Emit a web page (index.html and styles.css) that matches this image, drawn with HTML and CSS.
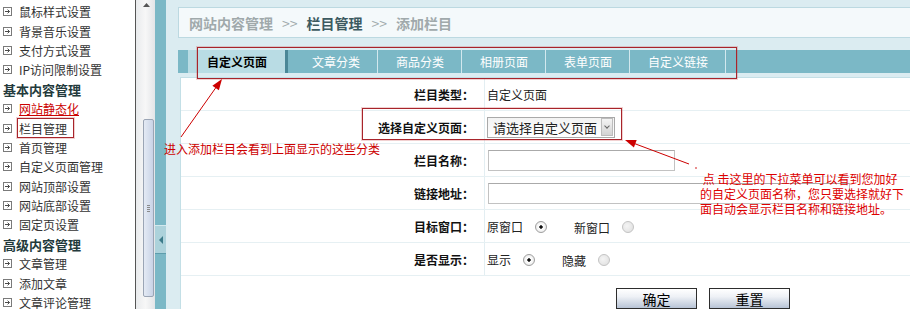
FILE: index.html
```html
<!DOCTYPE html>
<html>
<head>
<meta charset="utf-8">
<title>添加栏目</title>
<link rel="stylesheet" href="styles.css">
</head>
<body>
<svg width="0" height="0" class="defs">
  <symbol id="ico-go" viewBox="0 0 9 9">
    <rect x="0.5" y="0.5" width="8" height="8" fill="#fff" stroke="#7a7a7a"/>
    <path d="M2 4.5h4.5M4.6 2.6l1.9 1.9-1.9 1.9" fill="none" stroke="#4a4a4a"/>
  </symbol>
</svg>

<div class="page">
  <div class="sidebar">
    <ul class="menu">
      <li><svg class="ico"><use href="#ico-go"/></svg>鼠标样式设置</li>
      <li><svg class="ico"><use href="#ico-go"/></svg>背景音乐设置</li>
      <li><svg class="ico"><use href="#ico-go"/></svg>支付方式设置</li>
      <li><svg class="ico"><use href="#ico-go"/></svg>IP访问限制设置</li>
      <li class="head">基本内容管理</li>
      <li><svg class="ico"><use href="#ico-go"/></svg><span class="hot">网站静态化</span></li>
      <li><svg class="ico"><use href="#ico-go"/></svg>栏目管理</li>
      <li><svg class="ico"><use href="#ico-go"/></svg>首页管理</li>
      <li><svg class="ico"><use href="#ico-go"/></svg>自定义页面管理</li>
      <li><svg class="ico"><use href="#ico-go"/></svg>网站顶部设置</li>
      <li><svg class="ico"><use href="#ico-go"/></svg>网站底部设置</li>
      <li><svg class="ico"><use href="#ico-go"/></svg>固定页设置</li>
      <li class="head">高级内容管理</li>
      <li><svg class="ico"><use href="#ico-go"/></svg>文章管理</li>
      <li><svg class="ico"><use href="#ico-go"/></svg>添加文章</li>
      <li><svg class="ico"><use href="#ico-go"/></svg>文章评论管理</li>
    </ul>
  </div>

  <div class="scrollbar">
    <div class="sb-up"><svg width="7" height="4"><path d="M0 4L3.5 0 7 4z" fill="#555"/></svg></div>
    <div class="sb-track">
      <div class="sb-thumb"><span class="grip"></span></div>
    </div>
  </div>

  <div class="splitter">
    <div class="split-btn"></div>
  </div>

  <div class="main">
    <div class="crumb">
      <span>网站内容管理</span><span class="sep">&gt;&gt;</span><span class="cur">栏目管理</span><span class="sep">&gt;&gt;</span><span>添加栏目</span>
    </div>

    <div class="tabs">
      <span class="tab active">自定义页面</span>
      <span class="tab">文章分类</span>
      <span class="tab">商品分类</span>
      <span class="tab">相册页面</span>
      <span class="tab">表单页面</span>
      <span class="tab">自定义链接</span>
    </div>

    <div class="panel">
      <table class="form">
        <tr>
          <th>栏目类型：</th>
          <td>自定义页面</td>
        </tr>
        <tr>
          <th>选择自定义页面：</th>
          <td><div class="select"><span>请选择自定义页面</span><span class="drop"></span></div></td>
        </tr>
        <tr>
          <th>栏目名称：</th>
          <td><input class="text" type="text"></td>
        </tr>
        <tr>
          <th>链接地址：</th>
          <td><input class="text wide" type="text"></td>
        </tr>
        <tr>
          <th>目标窗口：</th>
          <td class="opts"><span>原窗口</span><input class="radio" type="radio" name="target" checked><span class="gap">新窗口</span><input class="radio" type="radio" name="target"></td>
        </tr>
        <tr>
          <th>是否显示：</th>
          <td class="opts"><span>显示</span><input class="radio" type="radio" name="show" checked><span class="gap">隐藏</span><input class="radio" type="radio" name="show"></td>
        </tr>
      </table>
      <div class="actions">
        <button class="btn">确定</button>
        <button class="btn">重置</button>
      </div>
    </div>
  </div>

  <!-- annotations drawn over the screenshot -->
  <div class="notes">
    <div class="box box-menu"></div>
    <div class="box box-tabs"></div>
    <div class="box box-select"></div>
    <svg class="arrows" width="910" height="309">
      <line x1="181" y1="137" x2="217" y2="86" stroke="#c00" stroke-width="1"/>
      <polygon points="222,79 218.9,90.3 212.4,85.7" fill="#c00"/>
      <line x1="689" y1="164" x2="633" y2="143" stroke="#c00" stroke-width="1"/>
      <polygon points="625,140 636.7,140.1 633.9,147.6" fill="#c00"/>
      <circle cx="696" cy="168" r="0.8" fill="#c00"/>
    </svg>
    <div class="note note-tabs">进入添加栏目会看到上面显示的这些分类</div>
    <div class="note note-select">&nbsp;点 击这里的下拉菜单可以看到您加好<br>的自定义页面名称，您只要选择就好下<br>面自动会显示栏目名称和链接地址。</div>
  </div>
</div>
</body>
</html>
```

FILE: styles.css
```css
body {
    margin: 0;
    font-family: "Noto Sans CJK SC", "Noto Sans", sans-serif;
    font-size: 12px;
    color: #222;
}

.defs {
    position: absolute;
}

.page {
    position: relative;
    display: flex;
    width: 910px;
    height: 309px;
    overflow: hidden;
    background: #fff;
}

/* left menu */
.sidebar {
    width: 135px;
    flex: none;
    overflow: hidden;
}

.menu {
    list-style: none;
    margin: 0;
    padding: 2px 0 0 3px;
}

.menu li {
    display: flex;
    align-items: center;
    height: 19.4px;
    white-space: nowrap;
    color: #333;
}

.menu .ico {
    width: 9px;
    height: 9px;
    margin-right: 7px;
    flex: none;
}

.menu .head {
    font-size: 13px;
    font-weight: bold;
    color: #233a3c;
}

.menu .hot {
    color: #c00;
    text-decoration: underline;
}

/* fake scrollbar of the menu frame */
.scrollbar {
    width: 19px;
    flex: none;
    border-left: 1px solid #555;
    background: linear-gradient(to right, #e9ebed, #f7f7f7 50%, #e3e5e8);
    display: flex;
    flex-direction: column;
}

.sb-up {
    height: 13px;
    display: flex;
    justify-content: center;
    padding: 3px 0 0 2px;
    box-sizing: border-box;
}

.sb-track {
    flex: 1;
    padding: 106px 0 0 7px;
}

.sb-thumb {
    width: 9px;
    height: 176px;
    border: 1px solid #9ba5b5;
    border-radius: 2px;
    background: linear-gradient(to right, #e4eaf4, #c9d3e6);
    display: flex;
    align-items: center;
    justify-content: center;
}

.grip {
    width: 3px;
    height: 7px;
    background: repeating-linear-gradient(#8a8a8a 0 1px, transparent 1px 2px);
}

/* collapse strip */
.splitter {
    width: 11px;
    flex: none;
    background: #7bb8c6;
    padding-top: 225px;
    box-sizing: border-box;
}

.split-btn {
    height: 27px;
    background: #acd2db;
    border-top: 1px solid #d2e9ee;
    border-bottom: 1px solid #5e9dac;
    display: flex;
    align-items: center;
    justify-content: center;
}

.split-btn::before {
    content: "";
    border-right: 4px solid #3c7b8a;
    border-top: 4px solid transparent;
    border-bottom: 4px solid transparent;
}

/* main frame */
.main {
    flex: 1;
    min-width: 0;
    background: #dbecf1;
    padding: 7px 0 0 12px;
    overflow: hidden;
}

.crumb {
    height: 29px;
    margin-right: -30px;
    border: 1px solid #bcd9e1;
    background: #f4f9fb;
    padding-left: 10px;
    display: flex;
    align-items: center;
    font-size: 14px;
    font-weight: bold;
    color: #a0a9ab;
}

.crumb .sep {
    margin: 0 9px;
    font-weight: normal;
}

.crumb .cur {
    color: #3c5a61;
}

.tabs {
    margin: 12px -30px 0 0;
    height: 23px;
    background: #7bb8c6;
    display: flex;
    padding-left: 10px;
}

.tab {
    padding: 0 17px 0 18px;
    border-right: 1px solid #d2e8ee;
    color: #fff;
    line-height: 23px;
    white-space: nowrap;
}

.tab.active {
    background: #b9dce4;
    color: #000;
    font-weight: bold;
    padding: 0 18px 0 19px;
    border-right: 3px solid #4a8797;
    margin-right: 6px;
}

.panel {
    margin: 4px -30px 0 2px;
    height: 400px;
    background: #fff;
    border: 1px solid #c3dfe6;
}

.form {
    border-collapse: collapse;
    width: 100%;
}

.form th,
.form td {
    height: 32px;
    padding: 0;
    border-bottom: 1px solid #e6f0f3;
}

.form th {
    width: 293px;
    padding-right: 10px;
    text-align: right;
    font-weight: bold;
    color: #111;
    border-right: 1px solid #e3eef2;
}

.form td {
    padding-left: 2px;
    color: #222;
}

.select {
    display: flex;
    align-items: center;
    width: 128px;
    height: 21px;
    box-sizing: border-box;
    border: 1px solid #a9a9a9;
    background: linear-gradient(#f3f3f3, #fff);
    padding-left: 5px;
    font-size: 13px;
    white-space: nowrap;
}

.select .drop {
    margin: 0 1px 0 auto;
    width: 10px;
    height: 16px;
    border: 1px solid #bdbdbd;
    background: linear-gradient(#f4f4f4, #d3d3d3);
    display: flex;
    align-items: center;
    justify-content: center;
}

.select .drop::before {
    content: "";
    width: 3px;
    height: 3px;
    border-right: 1px solid #666;
    border-bottom: 1px solid #666;
    transform: rotate(45deg);
    margin-top: -2px;
}

.text {
    display: block;
    width: 187px;
    height: 21px;
    box-sizing: border-box;
    margin: 0 0 0 1px;
    border: 1px solid #c2c2c2;
    border-top-color: #aaa;
    padding: 0;
}

.text.wide {
    width: 362px;
}

.opts {
    white-space: nowrap;
}

.opts span,
.opts .radio {
    vertical-align: middle;
}

.opts .gap {
    margin-left: 27px;
}

.radio {
    appearance: none;
    width: 12px;
    height: 12px;
    margin: 0 0 0 12px;
    border-radius: 50%;
    border: 1px solid #c4c4c4;
    background: radial-gradient(circle at 40% 40%, #f4f4f4, #dedede);
}

.radio:checked {
    border-color: #a0a0a0;
    background: radial-gradient(circle, #111 0 1.4px, #fff 2px, #f2f2f2 60%, #dadada);
}

.actions {
    display: flex;
    gap: 12px;
    padding: 12px 0 0 435px;
}

.btn {
    width: 81px;
    height: 21px;
    padding: 0;
    border: 1px solid #2d2d2d;
    background: linear-gradient(#fff, #eef1f6 40%, #b8c4d6);
    font-family: inherit;
    font-size: 14px;
    line-height: 18px;
    color: #000;
}

/* annotations */
.notes {
    position: absolute;
    left: 0;
    top: 0;
    width: 910px;
    height: 309px;
    pointer-events: none;
}

.arrows {
    position: absolute;
    left: 0;
    top: 0;
}

.box {
    position: absolute;
    border: 1px solid #a8242b;
    box-shadow: 0 0 0 1px rgba(200, 70, 70, 0.25);
}

.box-menu {
    left: 17px;
    top: 118px;
    width: 55px;
    height: 18px;
}

.box-tabs {
    left: 197px;
    top: 47px;
    width: 538px;
    height: 30px;
}

.box-select {
    left: 362px;
    top: 108px;
    width: 258px;
    height: 30px;
}

.note {
    position: absolute;
    color: #d00;
    font-size: 12px;
    line-height: 15px;
    white-space: nowrap;
}

.note-tabs {
    left: 164px;
    top: 141px;
    color: #c00;
}

.note-select {
    left: 700px;
    top: 171px;
}
```
